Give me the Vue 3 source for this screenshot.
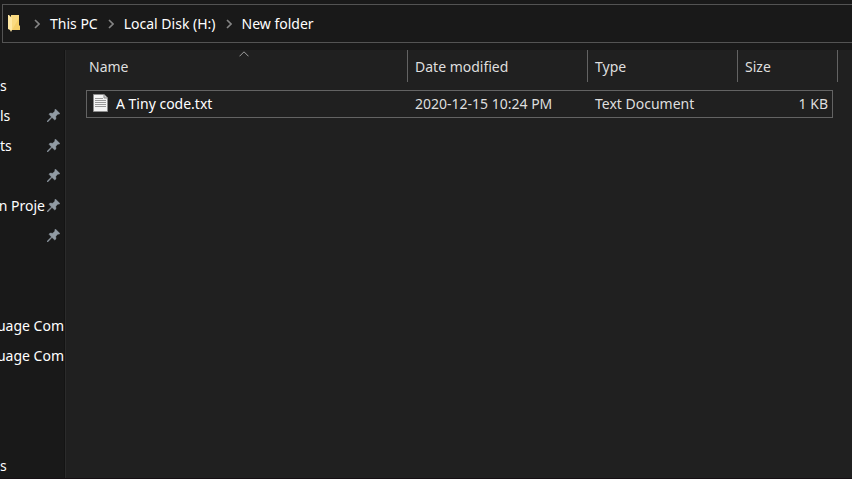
<script setup>
const crumbs = ['This PC', 'Local Disk (H:)', 'New folder']
const columns = ['Name', 'Date modified', 'Type', 'Size']
const files = [
  { name: 'A Tiny code.txt', date: '2020-12-15 10:24 PM', type: 'Text Document', size: '1 KB' },
]
const groups = [
  [
    { label: 's' },
    { label: 'ls', pinned: true },
    { label: 'ts', pinned: true },
    { label: '', pinned: true },
    { label: 'n Proje', pinned: true, long: true },
    { label: '', pinned: true },
    { label: '' },
    { label: '' },
    { label: 'uage Com', long: true },
    { label: 'uage Com', long: true },
    { label: '' },
    { label: '' },
  ],
  [{ label: 's' }],
]
</script>

<template>
  <div class="explorer">
    <nav class="address">
      <svg class="folder" width="13" height="18" viewBox="0 0 13 18">
        <path d="M3 0H11V10L12 11V15H3Z" fill="#f5cf69" />
        <path d="M3 0H11V3L4 15H3Z" fill="#fada80" />
        <path d="M0 0H1L4 3V15L3 17L2 15L0 14Z" fill="#ffe8a3" />
      </svg>
      <ol class="crumbs">
        <li v-for="c in crumbs" :key="c">
          <svg width="6" height="10" viewBox="0 0 6 10">
            <path d="M1 1L5 5L1 9" fill="none" stroke="#858585" stroke-width="1.6" />
          </svg>
          <a href="#">{{ c }}</a>
        </li>
      </ol>
    </nav>

    <div class="body">
      <aside class="tree">
        <ul v-for="(group, g) in groups" :key="g">
          <li v-for="(item, i) in group" :key="i">
            <a href="#" class="label" :class="{ long: item.long }">{{ item.label }}</a>
            <svg v-if="item.pinned" class="pin" width="13" height="13" viewBox="0 0 13 13">
              <path
                d="M8.4 0L13 4.6L11.8 5.3L11 5L8.8 7.3L9 10L7.7 11L5 8.5L1 12.8L0 13L0.2 12L4.4 7.9L2 5.3L3 4.1L5.7 4.2L8 2L7.7 1.1Z"
                fill="#919ba4"
                stroke="#919ba4"
                stroke-width="0.4"
              />
            </svg>
          </li>
        </ul>
      </aside>

      <main class="content">
        <table class="files">
          <thead>
            <tr>
              <th v-for="(c, i) in columns" :key="c" scope="col">
                {{ c }}
                <svg v-if="i === 0" class="sort" width="10" height="6" viewBox="0 0 10 6">
                  <path d="M0.5 5.3L5 0.8L9.5 5.3" fill="none" stroke="#a0a0a0" />
                </svg>
              </th>
            </tr>
          </thead>
          <tbody>
            <tr v-for="f in files" :key="f.name">
              <td class="name">
                <svg width="15" height="18" viewBox="0 0 15 18">
                  <path d="M0.5 0.5H11L14.5 4V17.5H0.5Z" fill="#f4f4f4" stroke="#8d8d8d" />
                  <path d="M11 0.5V4H14.5" fill="#d4d4d4" stroke="#8d8d8d" />
                  <path
                    d="M2 4.5H10M2 6.5H13M2 8.5H13M2 10.5H13M2 12.5H13"
                    stroke="#9a9a9a"
                  />
                </svg>
                <span>{{ f.name }}</span>
              </td>
              <td>{{ f.date }}</td>
              <td>{{ f.type }}</td>
              <td class="size">{{ f.size }}</td>
            </tr>
          </tbody>
        </table>
      </main>
    </div>
  </div>
</template>

<style>
body {
  margin: 0;
  background: #191919;
}
</style>

<style scoped>
.explorer {
  display: flex;
  flex-direction: column;
  box-sizing: border-box;
  height: 100vh;
  padding-top: 4px;
  overflow: hidden;
  border-bottom: 1px solid #161014;
  background: #191919;
  color: #fff;
  font: 14px/20px 'Noto Sans', 'Open Sans', sans-serif;
  white-space: nowrap;
}

a {
  color: inherit;
  text-decoration: none;
}

ul,
ol {
  margin: 0;
  padding: 0;
  list-style: none;
}

.address {
  display: flex;
  align-items: center;
  gap: 13px;
  box-sizing: border-box;
  height: 39px;
  margin-left: 2px;
  padding-left: 5px;
  border: 1px solid #535353;
  border-right: 0;
}

.crumbs {
  display: flex;
  gap: 10px;
}

.crumbs li {
  display: flex;
  align-items: center;
  gap: 10px;
}

.body {
  display: flex;
  flex: 1;
  min-height: 0;
  margin-top: 7px;
}

.tree {
  display: flex;
  flex-direction: column;
  flex: none;
  gap: 20px;
  box-sizing: border-box;
  width: 65px;
  padding-top: 21px;
  border-right: 1px solid #141414;
  overflow: hidden;
}

.tree li {
  display: flex;
  align-items: center;
  gap: 2px;
  height: 30px;
}

.label {
  display: flex;
  flex: 1;
  min-width: 0;
}

.long {
  justify-content: flex-end;
}

.pin {
  flex: none;
  margin: 0 4px 2px 0;
}

.content {
  flex: 1;
  min-width: 0;
  padding-left: 20px;
  border-left: 1px solid #2b2b2b;
  background: #202020;
}

.files,
.files thead,
.files tbody {
  display: block;
}

.files {
  width: 752px;
  color: #dedede;
}

.files tr {
  display: grid;
  grid-template-columns: 322px 180px 150px 1fr;
}

.files th {
  position: relative;
  height: 32px;
  box-sizing: border-box;
  padding: 7px 7px 0;
  border-right: 1px solid #636363;
  font-weight: 400;
  text-align: left;
}

.files th:first-child {
  padding-left: 3px;
}

.sort {
  position: absolute;
  top: 1px;
  left: 50%;
  margin-left: -8px;
}

.files tbody tr {
  align-items: center;
  box-sizing: border-box;
  height: 28px;
  margin: 8px 5px 0 0;
  border: 1px solid #636363;
}

.files td {
  padding: 0 6px;
}

.files .name {
  display: flex;
  align-items: center;
  gap: 8px;
  color: #fff;
}

.files .name svg {
  margin-top: -3px;
}

.files .size {
  padding-right: 4px;
  text-align: right;
}
</style>
